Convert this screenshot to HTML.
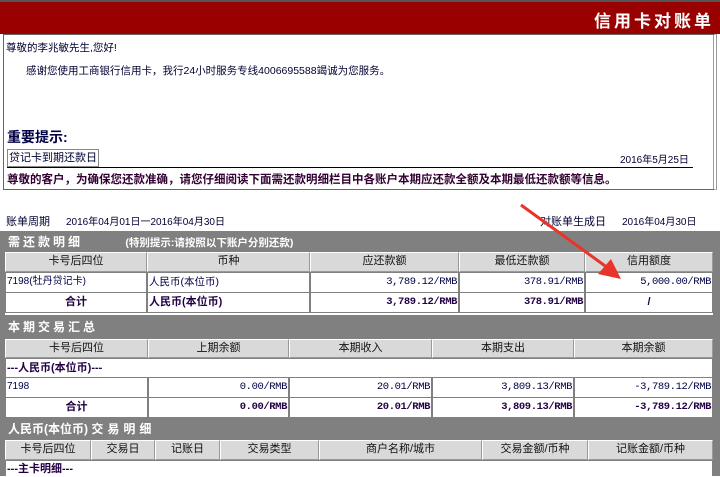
<!DOCTYPE html>
<html><head><meta charset="utf-8"><style>
*{margin:0;padding:0;box-sizing:border-box}
body{width:720px;height:476px;overflow:hidden;background:#fff;position:relative;font-family:"Liberation Sans","Noto Sans CJK SC","WenQuanYi Zen Hei",sans-serif;font-size:11px;color:#000033}
.a{position:absolute;white-space:nowrap}
.hd{position:absolute;background:#d9d9d9;border:1px solid #fff;border-right-color:#999;border-bottom-color:#999;text-align:center;line-height:17px;color:#111;font-size:11px}
.c{position:absolute;background:#fff;line-height:18px;font-size:10px;color:#000044;padding:0 1px}
.n{font-family:"Liberation Mono",monospace;font-size:10.5px;text-align:right;letter-spacing:-0.4px}
.b{font-weight:bold;color:#220044}
.bar{position:absolute;left:5px;width:708px;color:#fff;font-weight:bold;font-size:12px;letter-spacing:3px;padding-left:3px}
</style></head><body>
<div class="a" style="left:0;top:0;width:720px;height:34px;background:#990000;border-top:2px solid #555"></div>
<div class="a" style="right:6px;top:7px;color:#fff;font-weight:bold;font-size:17px;letter-spacing:3px">信用卡对账单</div>
<div class="a" style="left:3px;top:34px;width:714px;height:156px;border:1px solid #666;border-right:4px double #999"></div>
<div class="a" style="left:6px;top:40px;font-size:10.5px">尊敬的李兆敏先生,您好!</div>
<div class="a" style="left:26px;top:63px;font-size:10.5px">感谢您使用工商银行信用卡，我行24小时服务专线4006695588竭诚为您服务。</div>
<div class="a" style="left:7px;top:127px;font-size:14px;font-weight:bold;color:#000044">重要提示:</div>
<div class="a" style="left:7px;top:149px;height:18px;border:1px solid #888;padding:0 1px;line-height:16px">贷记卡到期还款日</div>
<div class="a" style="left:620px;top:151px;font-size:10px">2016年5月25日</div>
<div class="a" style="left:7px;top:167px;width:686px;border-top:1px solid #000"></div>
<div class="a" style="left:7px;top:171px;font-weight:bold;color:#330033;font-size:11.5px">尊敬的客户，为确保您还款准确，请您仔细阅读下面需还款明细栏目中各账户本期应还款全额及本期最低还款额等信息。</div>
<div class="a" style="left:6px;top:213px;font-size:11px">账单周期</div>
<div class="a" style="left:66px;top:213px;font-size:10px">2016年04月01日一2016年04月30日</div>
<div class="a" style="left:540px;top:213px;font-size:11px">对账单生成日</div>
<div class="a" style="left:622px;top:213px;font-size:10px">2016年04月30日</div>

<div class="a" style="left:0;top:231px;width:720px;height:245px;background:#808080"></div>
<div class="bar" style="top:233px;line-height:18px">需还款明细 <span style="font-size:10.5px;letter-spacing:0;margin-left:36px">(特别提示:请按照以下账户分别还款)</span></div>
<div class="hd" style="left:5px;top:252px;width:142px;height:20px">卡号后四位</div>
<div class="hd" style="left:147px;top:252px;width:163px;height:20px">币种</div>
<div class="hd" style="left:310px;top:252px;width:149px;height:20px">应还款额</div>
<div class="hd" style="left:459px;top:252px;width:126px;height:20px">最低还款额</div>
<div class="hd" style="left:585px;top:252px;width:128px;height:20px">信用额度</div>
<div class="c" style="left:6px;top:273px;width:140px;height:19px">7198(牡丹贷记卡)</div>
<div class="c" style="left:148px;top:273px;width:161px;height:19px;font-size:10.5px">人民币(本位币)</div>
<div class="c n" style="left:311px;top:273px;width:147px;height:19px">3,789.12/RMB</div>
<div class="c n" style="left:460px;top:273px;width:124px;height:19px">378.91/RMB</div>
<div class="c n" style="left:586px;top:273px;width:126px;height:19px">5,000.00/RMB</div>
<div class="c b" style="left:6px;top:293px;width:140px;height:19px;text-align:center;font-size:11px">合计</div>
<div class="c b" style="left:148px;top:293px;width:161px;height:19px;font-size:11px">人民币(本位币)</div>
<div class="c n b" style="left:311px;top:293px;width:147px;height:19px">3,789.12/RMB</div>
<div class="c n b" style="left:460px;top:293px;width:124px;height:19px">378.91/RMB</div>
<div class="c b" style="left:586px;top:293px;width:126px;height:19px;text-align:center;font-size:11px">/</div>
<div class="a" style="left:5px;top:313px;width:708px;height:2px;background:#fff"></div>

<div class="bar" style="top:317px;line-height:20px">本期交易汇总</div>
<div class="hd" style="left:5px;top:339px;width:143px;height:19px">卡号后四位</div>
<div class="hd" style="left:148px;top:339px;width:141px;height:19px">上期余额</div>
<div class="hd" style="left:289px;top:339px;width:143px;height:19px">本期收入</div>
<div class="hd" style="left:432px;top:339px;width:142px;height:19px">本期支出</div>
<div class="hd" style="left:574px;top:339px;width:139px;height:19px">本期余额</div>
<div class="c b" style="left:6px;top:359px;width:706px;height:18px;font-size:11px">---人民币(本位币)---</div>
<div class="c" style="left:6px;top:378px;width:141px;height:19px">7198</div>
<div class="c n" style="left:149px;top:378px;width:139px;height:19px">0.00/RMB</div>
<div class="c n" style="left:290px;top:378px;width:141px;height:19px">20.01/RMB</div>
<div class="c n" style="left:433px;top:378px;width:140px;height:19px">3,809.13/RMB</div>
<div class="c n" style="left:575px;top:378px;width:137px;height:19px">-3,789.12/RMB</div>
<div class="c b" style="left:6px;top:398px;width:141px;height:19px;text-align:center;font-size:11px">合计</div>
<div class="c n b" style="left:149px;top:398px;width:139px;height:19px">0.00/RMB</div>
<div class="c n b" style="left:290px;top:398px;width:141px;height:19px">20.01/RMB</div>
<div class="c n b" style="left:433px;top:398px;width:140px;height:19px">3,809.13/RMB</div>
<div class="c n b" style="left:575px;top:398px;width:137px;height:19px">-3,789.12/RMB</div>

<div class="bar" style="top:419px;line-height:20px;letter-spacing:0">人民币(本位币) <span style="letter-spacing:4px">交易明细</span></div>
<div class="hd" style="left:5px;top:440px;width:86px;height:20px">卡号后四位</div>
<div class="hd" style="left:91px;top:440px;width:64px;height:20px">交易日</div>
<div class="hd" style="left:155px;top:440px;width:65px;height:20px">记账日</div>
<div class="hd" style="left:220px;top:440px;width:99px;height:20px">交易类型</div>
<div class="hd" style="left:319px;top:440px;width:163px;height:20px">商户名称/城市</div>
<div class="hd" style="left:482px;top:440px;width:106px;height:20px">交易金额/币种</div>
<div class="hd" style="left:588px;top:440px;width:125px;height:20px">记账金额/币种</div>
<div class="c b" style="left:6px;top:461px;width:706px;height:15px;font-size:11px;line-height:16px">---主卡明细---</div>

<svg class="a" style="left:0;top:0" width="720" height="476">
<line x1="521" y1="205" x2="608" y2="268" stroke="#e8342a" stroke-width="3"/>
<polygon points="621,279 598,274 611,259" fill="#e8342a"/>
</svg>
</body></html>
